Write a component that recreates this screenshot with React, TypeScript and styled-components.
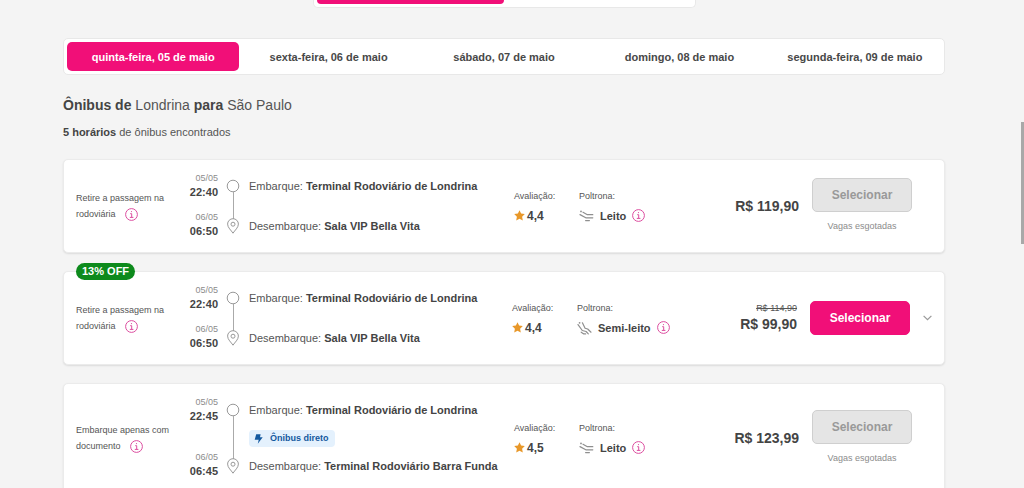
import React from "react";
import styled, { createGlobalStyle, css } from "styled-components";

const pink = "#f10f78";

const GlobalStyle = createGlobalStyle`
  *, *::before, *::after { box-sizing: border-box; }
  body {
    margin: 0;
    background: #f4f4f4;
    color: #555;
    font-family: "Liberation Sans", Arial, sans-serif;
    font-size: 11px;
  }
  button { font-family: inherit; cursor: pointer; }
  h1, p { margin: 0; }
  strong { color: #444; }
`;

const Page = styled.main`
  height: 100vh;
  overflow: hidden;
  padding: 0 79px 0 63px;
`;

const StepBar = styled.div`
  display: flex;
  width: 44%;
  max-width: 383px;
  height: 8px;
  margin: 0 auto 30px;
  padding: 0 3px 3px;
  background: #fff;
  border: 1px solid #e8e8e8;
  border-top: 0;
  border-radius: 0 0 5px 5px;
`;

const StepFill = styled.div`
  width: 50%;
  background: ${pink};
  border-radius: 0 0 4px 4px;
`;

const Days = styled.nav`
  display: flex;
  gap: 3px;
  padding: 3px;
  background: #fff;
  border: 1px solid #e8e8e8;
  border-radius: 5px;
`;

const Day = styled.button<{ $active?: boolean }>`
  flex: 1 1 0;
  height: 29px;
  padding: 0;
  border: 0;
  border-radius: 5px;
  background: ${(p) => (p.$active ? pink : "transparent")};
  color: ${(p) => (p.$active ? "#fff" : "#484848")};
  font-size: 11px;
  font-weight: 700;
`;

const Title = styled.h1`
  margin-top: 20px;
  font-size: 14px;
  line-height: 20px;
  font-weight: 400;
`;

const Count = styled.p`
  margin: 9px 0 19px;
  line-height: 16px;
`;

const Card = styled.article`
  position: relative;
  display: flex;
  margin-bottom: 18px;
  padding: 11px 0 12px 12px;
  background: #fff;
  border: 1px solid #ebebeb;
  border-radius: 5px;
  box-shadow: 0 1px 2px rgba(0, 0, 0, 0.1);
`;

const Discount = styled.span`
  position: absolute;
  top: -9px;
  left: 12px;
  padding: 0 6px;
  border-radius: 9px;
  background: #0d8a1c;
  color: #fff;
  font-size: 11px;
  font-weight: 700;
  line-height: 17px;
`;

const Notice = styled.p`
  flex: 0 0 104px;
  align-self: center;
  font-size: 9px;
  line-height: 16px;
`;

const InfoButton = styled.button`
  width: 13px;
  height: 13px;
  padding: 0;
  border: 0;
  background: none;
  color: #dc4d9f;
  vertical-align: middle;
  svg { display: block; }
  ${Notice} & { margin-left: 9px; }
`;

const Times = styled.div`
  flex: 0 0 38px;
  display: flex;
  flex-direction: column;
  justify-content: space-between;
  padding-bottom: 2px;
  text-align: right;
  line-height: 14px;
`;

const Stamp = styled.time`
  display: flex;
  flex-direction: column;
`;

const StampDate = styled.span`
  color: #8c8c8c;
  font-size: 9px;
`;

const StampHour = styled.strong`
  font-size: 11px;
`;

const Track = styled.div`
  flex: 0 0 14px;
  display: flex;
  flex-direction: column;
  align-items: center;
  margin: 0 9px 0 8px;
  padding: 8px 0 6px;
  color: #999;
  svg { display: block; flex: none; }
`;

const Line = styled.span`
  flex: 1;
  width: 1px;
  margin: -1px 0;
  background: #aaa;
`;

const Places = styled.div`
  flex: 1;
  display: flex;
  flex-direction: column;
  justify-content: space-between;
  align-items: flex-start;
  padding-top: 1px;
  white-space: nowrap;
`;

const Place = styled.p`
  min-height: 28px;
  line-height: 28px;
  & + & { margin-top: 12px; }
`;

const Direct = styled.span`
  display: flex;
  align-items: center;
  gap: 7px;
  margin: 6px 0 5px;
  padding: 0 6px 0 5px;
  border-radius: 4px;
  background: #e4f1fd;
  color: #14599f;
  font-size: 9px;
  font-weight: 700;
  line-height: 17px;
`;

const Fact = styled.div<{ $width: number }>`
  flex: 0 0 ${(p) => p.$width}px;
  align-self: center;
  line-height: 20px;
`;

const FactLabel = styled.div`
  font-size: 9px;
`;

const FactValue = styled.div<{ $gap: number }>`
  display: flex;
  align-items: center;
  gap: ${(p) => p.$gap}px;
  color: #444;
  font-weight: 700;
`;

const Score = styled.span`
  font-size: 12px;
`;

const Prices = styled.div`
  flex: 0 0 90px;
  align-self: center;
  display: flex;
  flex-direction: column;
  text-align: right;
`;

const OldPrice = styled.s`
  font-size: 9px;
  line-height: 12px;
`;

const Price = styled.strong`
  font-size: 14px;
  line-height: 20px;
`;

const Action = styled.div`
  flex: 0 0 100px;
  align-self: center;
  margin-left: 13px;
  text-align: center;
`;

const Select = styled.button`
  width: 100%;
  height: 34px;
  border: 1px solid ${pink};
  border-radius: 5px;
  background: ${pink};
  color: #fff;
  font-size: 12px;
  font-weight: 700;
  ${(p) =>
    p.disabled &&
    css`
      border-color: #cfcfcf;
      background: #e5e5e5;
      color: #999;
      cursor: default;
    `}
`;

const SoldOut = styled.p`
  margin-top: 7px;
  color: #8c8c8c;
  font-size: 9px;
  line-height: 14px;
`;

const Tail = styled.div<{ $wide?: boolean }>`
  flex: 0 0 ${(p) => (p.$wide ? 34 : 32)}px;
  align-self: center;
  display: flex;
  justify-content: center;
`;

const Expand = styled.button`
  padding: 4px;
  border: 0;
  background: none;
  color: #999;
  svg { display: block; }
`;

const ScrollThumb = styled.div`
  position: fixed;
  top: 25%;
  right: 0;
  width: 3px;
  height: 25%;
  background: #a8a8a8;
`;

const Info = () => (
  <InfoButton type="button" aria-label="Mais informações">
    <svg width="13" height="13" viewBox="0 0 13 13" fill="none" stroke="currentColor">
      <circle cx="6.5" cy="6.5" r="5.9" />
      <path d="M5.2 5.7h1.5v3.6M4.8 9.4h3.6" />
      <circle cx="6.5" cy="3.6" r=".6" fill="currentColor" stroke="none" />
    </svg>
  </InfoButton>
);

const Start = () => (
  <svg width="14" height="14" viewBox="0 0 14 14" fill="none" stroke="currentColor">
    <circle cx="7" cy="7" r="5.8" />
  </svg>
);

const Pin = () => (
  <svg width="14" height="16" viewBox="0 0 14 16" fill="none" stroke="currentColor">
    <path d="M7 15.2C5.2 12.3 1.6 9.6 1.6 6.1a5.4 5.4 0 0 1 10.8 0C12.4 9.6 8.8 12.3 7 15.2z" />
    <circle cx="7" cy="6.2" r="2" />
  </svg>
);

const Star = () => (
  <svg width="11" height="11" viewBox="0 0 11 11" fill="#e8982a">
    <path d="M5.5.2l1.6 3.4 3.7.5-2.7 2.6.7 3.8-3.3-1.8-3.3 1.8.7-3.8L.2 4.1l3.7-.5z" />
  </svg>
);

const Seat = ({ semi }: { semi?: boolean }) => (
  <svg width="15" height="14" viewBox="0 0 15 14" fill="none" stroke="#8f8f8f" strokeWidth="1.2" strokeLinecap="round" strokeLinejoin="round">
    {semi ? (
      <>
        <circle cx="2.6" cy="1.8" r=".9" fill="#8f8f8f" stroke="none" />
        <path d="M5.4 1.8l2.7 5.4 2.6.8 3.3 3.2" />
        <path d="M1 3.6l4.3 5.9 3.8 1 2.2 2.4" />
        <path d="M4.2 11.2l2.6 1.7h1.8" />
      </>
    ) : (
      <>
        <circle cx="2" cy="2.4" r=".9" fill="#8f8f8f" stroke="none" />
        <path d="M4 3.2l4.4 2.5h5.4" />
        <path d="M1 5.6l5.8 3.2h7" />
        <path d="M6.6 11.6h3.8" />
      </>
    )}
  </svg>
);

const Bolt = () => (
  <svg width="9" height="10" viewBox="0 0 9 10" fill="currentColor">
    <path d="M2.2.3h4.4l-.6 3h2.7L3.8 9.8l.9-4H.7z" />
  </svg>
);

const Chevron = () => (
  <svg width="9" height="6" viewBox="0 0 9 6" fill="none" stroke="currentColor" strokeWidth="1.2">
    <path d="M.6.8l3.9 3.9L8.4.8" />
  </svg>
);

type Trip = {
  notice: string;
  from: string;
  to: string;
  departure: string;
  arrival: string;
  score: string;
  seat: string;
  price: string;
  oldPrice?: string;
  discount?: string;
  direct?: boolean;
};

const days = [
  "quinta-feira, 05 de maio",
  "sexta-feira, 06 de maio",
  "sábado, 07 de maio",
  "domingo, 08 de maio",
  "segunda-feira, 09 de maio",
];

const trips: Trip[] = [
  {
    notice: "Retire a passagem na rodoviária",
    from: "Terminal Rodoviário de Londrina",
    to: "Sala VIP Bella Vita",
    departure: "22:40",
    arrival: "06:50",
    score: "4,4",
    seat: "Leito",
    price: "R$ 119,90",
  },
  {
    notice: "Retire a passagem na rodoviária",
    from: "Terminal Rodoviário de Londrina",
    to: "Sala VIP Bella Vita",
    departure: "22:40",
    arrival: "06:50",
    score: "4,4",
    seat: "Semi-leito",
    price: "R$ 99,90",
    oldPrice: "R$ 114,90",
    discount: "13% OFF",
  },
  {
    notice: "Embarque apenas com documento",
    from: "Terminal Rodoviário de Londrina",
    to: "Terminal Rodoviário Barra Funda",
    departure: "22:45",
    arrival: "06:45",
    score: "4,5",
    seat: "Leito",
    price: "R$ 123,99",
    direct: true,
  },
];

const TripCard = ({ trip }: { trip: Trip }) => {
  const available = Boolean(trip.oldPrice);
  return (
    <Card>
      {trip.discount && <Discount>{trip.discount}</Discount>}
      <Notice>
        {trip.notice}
        <Info />
      </Notice>
      <Times>
        <Stamp>
          <StampDate>05/05</StampDate>
          <StampHour>{trip.departure}</StampHour>
        </Stamp>
        <Stamp>
          <StampDate>06/05</StampDate>
          <StampHour>{trip.arrival}</StampHour>
        </Stamp>
      </Times>
      <Track>
        <Start />
        <Line />
        <Pin />
      </Track>
      <Places>
        <Place>
          Embarque: <strong>{trip.from}</strong>
        </Place>
        {trip.direct && (
          <Direct>
            <Bolt />
            Ônibus direto
          </Direct>
        )}
        <Place>
          Desembarque: <strong>{trip.to}</strong>
        </Place>
      </Places>
      <Fact $width={65}>
        <FactLabel>Avaliação:</FactLabel>
        <FactValue $gap={2}>
          <Star />
          <Score>{trip.score}</Score>
        </FactValue>
      </Fact>
      <Fact $width={130}>
        <FactLabel>Poltrona:</FactLabel>
        <FactValue $gap={6}>
          <Seat semi={trip.seat !== "Leito"} />
          {trip.seat}
          <Info />
        </FactValue>
      </Fact>
      <Prices>
        {trip.oldPrice && <OldPrice>{trip.oldPrice}</OldPrice>}
        <Price>{trip.price}</Price>
      </Prices>
      <Action>
        <Select type="button" disabled={!available}>
          Selecionar
        </Select>
        {!available && <SoldOut>Vagas esgotadas</SoldOut>}
      </Action>
      <Tail $wide={available}>
        {available && (
          <Expand type="button" aria-label="Ver detalhes">
            <Chevron />
          </Expand>
        )}
      </Tail>
    </Card>
  );
};

export default function App() {
  return (
    <>
      <GlobalStyle />
      <Page>
        <StepBar>
          <StepFill />
        </StepBar>
        <Days>
          {days.map((day, i) => (
            <Day key={day} type="button" $active={i === 0}>
              {day}
            </Day>
          ))}
        </Days>
        <Title>
          <strong>Ônibus de</strong> Londrina <strong>para</strong> São Paulo
        </Title>
        <Count>
          <strong>5 horários</strong> de ônibus encontrados
        </Count>
        {trips.map((trip) => (
          <TripCard key={trip.departure + trip.price} trip={trip} />
        ))}
      </Page>
      <ScrollThumb />
    </>
  );
}
